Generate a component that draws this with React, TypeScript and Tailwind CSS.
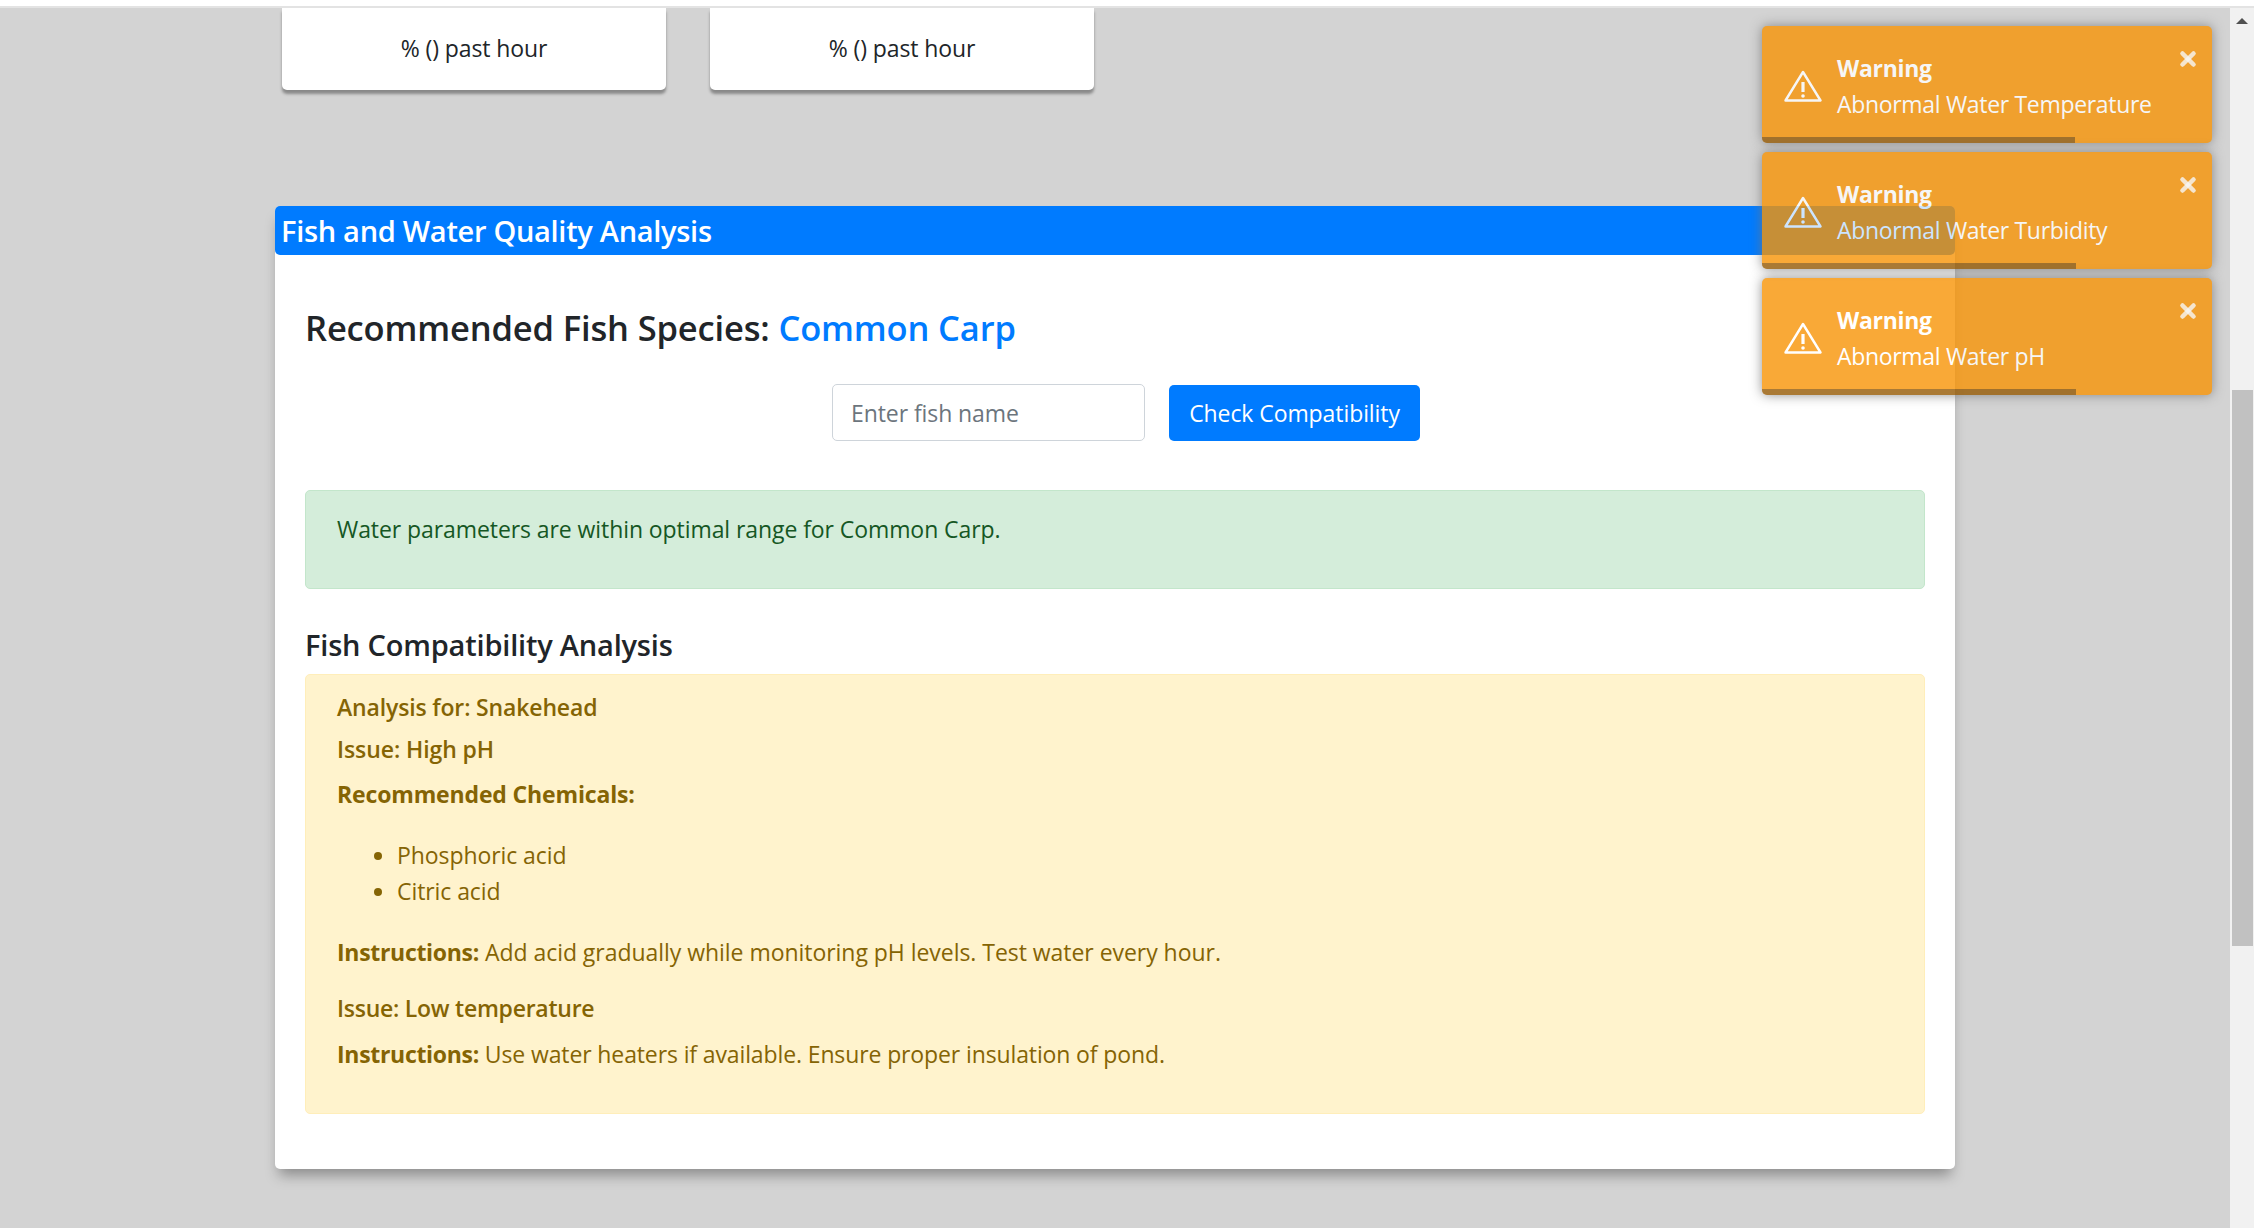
import { X } from "lucide-react";

const toasts = ["Abnormal Water Temperature", "Abnormal Water Turbidity", "Abnormal Water pH"];

function WarnIcon() {
  return (
    <svg width="38" height="32" viewBox="0 0 38 32" fill="none" className="shrink-0">
      <path d="M19 2 L36.5 30.5 H1.5 Z" stroke="white" strokeWidth="2.4" strokeLinejoin="round" />
      <path d="M19 12 V22" stroke="white" strokeWidth="3.2" />
      <circle cx="19" cy="26" r="1.8" fill="white" />
    </svg>
  );
}

function Toast({ text, bar }: { text: string; bar: string }) {
  return (
    <div className="relative h-[117px] w-[450px] overflow-hidden rounded-[5px] bg-[#f89406] text-white opacity-80 shadow-[0_0_12px_#777]">
      <div className="flex h-full items-center pl-[22px] pt-[2px]">
        <WarnIcon />
        <div className="ml-[15px]">
          <div className="h-[36px] text-[23px] leading-[36px] font-bold tracking-[-0.3px]">Warning</div>
          <div className="h-[36px] text-[23px] leading-[36px] tracking-[-0.32px]">{text}</div>
        </div>
      </div>
      <X className="absolute top-[22px] right-[13px] h-[22px] w-[22px] text-white/80" strokeWidth={5} />
      <div className={`absolute bottom-0 left-0 h-[6px] bg-black/40 ${bar}`} />
    </div>
  );
}

function StatCard() {
  return (
    <div className="flex h-[82px] w-[384px] items-center justify-center rounded-b-[5px] bg-white pb-[1px] text-[23px] tracking-[-0.1px] text-[#212529] shadow-[0_4px_3px_rgba(0,0,0,0.35)]">
      % () past hour
    </div>
  );
}

export default function App() {
  return (
    <div className="relative h-[1228px] overflow-hidden bg-white font-['Open_Sans',sans-serif] text-[23px] tracking-[-0.08px]">
      <div className="mt-[6px] h-[2px] bg-[#e3e3e3]" />
      <div className="flex h-[1220px]">
        <main className="flex-1 bg-[#d3d3d3] pl-[275px]">
          <div className="flex gap-[44px] pl-[7px]">
            <StatCard />
            <StatCard />
          </div>

          <section className="mt-[116px] w-[1680px] rounded-[5px] bg-white shadow-[0_10px_14px_-4px_rgba(0,0,0,0.35)]">
            <div className="h-[49px] rounded-[5px] bg-[#007bff] pl-[6px] text-[29px] leading-[50px] font-semibold tracking-[-0.3px] text-white">
              Fish and Water Quality Analysis
            </div>
            <div className="px-[30px] pt-[52px] pb-[55px]">
              <h3 className="h-[42px] text-[34.5px] leading-[42px] font-semibold tracking-[-0.15px] text-[#212529]">
                Recommended Fish Species: <span className="text-[#007bff]">Common Carp</span>
              </h3>

              <div className="mt-[35px] ml-[527px] flex gap-[24px]">
                <input
                  placeholder="Enter fish name"
                  className="h-[57px] w-[313px] rounded-[5px] border border-[#ced4da] bg-white px-[18px] tracking-[-0.08px] text-[#495057] placeholder:text-[#6c757d]"
                />
                <button className="mt-[1px] h-[56px] w-[251px] rounded-[5px] bg-[#007bff] tracking-[-0.08px] text-white">
                  Check Compatibility
                </button>
              </div>

              <div className="mt-[49px] h-[99px] rounded-[5px] border border-[#c3e6cb] bg-[#d4edda] px-[31px] pt-[20px] leading-[36px] text-[#155724]">
                Water parameters are within optimal range for Common Carp.
              </div>

              <h4 className="mt-[37px] h-[38px] text-[29px] leading-[38px] font-semibold tracking-[-0.2px] text-[#212529]">
                Fish Compatibility Analysis
              </h4>

              <div className="mt-[10px] h-[440px] rounded-[5px] border border-[#ffeeba] bg-[#fff3cd] px-[31px] pt-[14px] leading-[36px] text-[#856404]">
                <p className="font-semibold tracking-[-0.15px]">Analysis for: Snakehead</p>
                <p className="mt-[6px] font-semibold tracking-[-0.08px]">Issue: High pH</p>
                <p className="mt-[9px] font-bold tracking-[-0.15px]">Recommended Chemicals:</p>
                <ul className="mt-[25px] list-disc pl-[60px]">
                  <li>Phosphoric acid</li>
                  <li>Citric acid</li>
                </ul>
                <p className="mt-[25px] tracking-[-0.04px]">
                  <strong className="tracking-[-0.3px]">Instructions:</strong> Add acid gradually while monitoring pH levels. Test water every hour.
                </p>
                <p className="mt-[20px] font-semibold tracking-[-0.25px]">Issue: Low temperature</p>
                <p className="mt-[10px] tracking-[-0.12px]">
                  <strong className="tracking-[-0.3px]">Instructions:</strong> Use water heaters if available. Ensure proper insulation of pond.
                </p>
              </div>
            </div>
          </section>
        </main>

        <div className="relative w-[24px] bg-[#f1f1f1]">
          <div className="mx-auto mt-[10px] h-0 w-0 border-x-[6px] border-b-[6px] border-x-transparent border-b-[#505050]" />
          <div className="mt-[366px] ml-[2px] h-[556px] w-[21px] bg-[#c1c1c1]" />
        </div>
      </div>

      <div className="absolute top-[26px] right-[42px] flex flex-col gap-[9px]">
        <Toast text={toasts[0]} bar="w-[313px]" />
        <Toast text={toasts[1]} bar="w-[314px]" />
        <Toast text={toasts[2]} bar="w-[314px]" />
      </div>
    </div>
  );
}
